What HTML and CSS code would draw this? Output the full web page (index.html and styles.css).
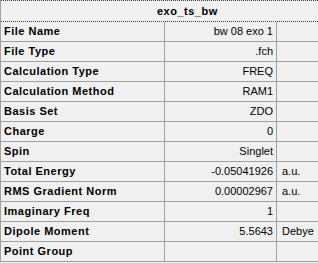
FILE: index.html
```html
<!DOCTYPE html>
<html>
<head>
<meta charset="utf-8">
<link rel="stylesheet" href="styles.css">
</head>
<body>
<div class="panel">
  <div class="header"><span class="title">exo_ts_bw</span></div>
  <div class="grid">
    <div class="label">File Name</div><div class="value">bw 08 exo 1</div><div class="unit"></div>
    <div class="label">File Type</div><div class="value">.fch</div><div class="unit"></div>
    <div class="label">Calculation Type</div><div class="value">FREQ</div><div class="unit"></div>
    <div class="label">Calculation Method</div><div class="value">RAM1</div><div class="unit"></div>
    <div class="label">Basis Set</div><div class="value">ZDO</div><div class="unit"></div>
    <div class="label">Charge</div><div class="value">0</div><div class="unit"></div>
    <div class="label">Spin</div><div class="value">Singlet</div><div class="unit"></div>
    <div class="label">Total Energy</div><div class="value">-0.05041926</div><div class="unit">a.u.</div>
    <div class="label">RMS Gradient Norm</div><div class="value">0.00002967</div><div class="unit">a.u.</div>
    <div class="label">Imaginary Freq</div><div class="value">1</div><div class="unit"></div>
    <div class="label">Dipole Moment</div><div class="value">5.5643</div><div class="unit">Debye</div>
    <div class="label">Point Group</div><div class="value"></div><div class="unit"></div>
  </div>
</div>
</body>
</html>
```
FILE: styles.css
```css
html, body {
  margin: 0;
  padding: 0;
  background: #f0f0f0;
  overflow: hidden;
}
.panel {
  width: 318px;
  border-left: 1px solid #a0a0a0;
  box-sizing: border-box;
  font-family: "Liberation Sans", Arial, sans-serif;
  font-size: 11px;
  color: #000;
}
.header {
  height: 22px;
  box-sizing: border-box;
  padding: 1px 0 1px 156px;
  line-height: 20px;
  background:
    repeating-linear-gradient(to right, #3c3c3c 0 1px, transparent 1px 2px) top left / 100% 1px no-repeat,
    repeating-linear-gradient(to right, #3c3c3c 0 1px, transparent 1px 2px) bottom left / 100% 1px no-repeat;
}
.title {
  font-weight: bold;
  letter-spacing: 0.5px;
}
.grid {
  display: grid;
  grid-template-columns: 164px 112px 1fr;
  grid-auto-rows: 20px;
}
.label, .value, .unit {
  line-height: 19px;
  border-bottom: 1px solid #a0a0a0;
  white-space: nowrap;
  overflow: hidden;
}
.label {
  font-weight: bold;
  letter-spacing: 0.5px;
  padding-left: 3px;
  border-right: 1px solid #a0a0a0;
}
.value {
  text-align: right;
  padding-right: 3px;
  border-right: 1px solid #a0a0a0;
}
.unit {
  padding-left: 5px;
}
```
